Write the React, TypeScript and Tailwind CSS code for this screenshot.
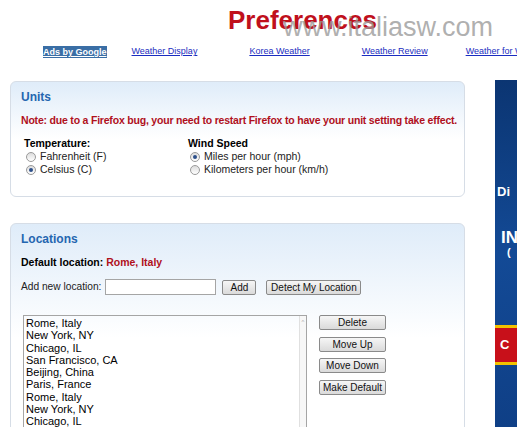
import React from 'react';

const Radio: React.FC<{ checked?: boolean }> = ({ checked }) => (
  <span className="inline-flex items-center justify-center w-[10px] h-[10px] rounded-full border border-[#9a9a9a] bg-gradient-to-b from-[#dcdcdc] to-white mr-[4px] shrink-0">
    {checked && <span className="w-[4px] h-[4px] rounded-full bg-[#2c4f8a]" />}
  </span>
);

const Btn: React.FC<{ label: string; className?: string }> = ({ label, className = '' }) => (
  <button
    className={`h-[15px] px-0 whitespace-nowrap border border-[#8a8a8a] rounded-[2px] bg-gradient-to-b from-[#f6f6f6] to-[#dadada] text-[10px] leading-[13px] text-[#111] ${className}`}
  >
    {label}
  </button>
);

const locations = [
  'Rome, Italy',
  'New York, NY',
  'Chicago, IL',
  'San Francisco, CA',
  'Beijing, China',
  'Paris, France',
  'Rome, Italy',
  'New York, NY',
  'Chicago, IL',
  'San Francisco, CA',
];

export default function App() {
  return (
    <div
      className="relative w-[517px] h-[427px] overflow-hidden bg-white"
      style={{ fontFamily: '"Liberation Sans", Arial, sans-serif' }}
    >
      {/* header */}
      <div className="pl-[228px] pt-[5px] h-[45px]">
        <h1 className="text-[26px] leading-[30px] font-bold text-[#c0101c]">Preferences</h1>
      </div>
      <div className="absolute left-[283px] top-[12px] text-[27px] leading-[30px] text-[#9a9a9a]/80 pointer-events-none whitespace-nowrap">
        www.italiasw.com
      </div>

      {/* link row */}
      <div className="flex items-center h-[14px] text-[9px] whitespace-nowrap">
        <span className="ml-[43px] w-[64px] h-[12px] bg-[#3a6ea5] text-white font-bold underline text-center leading-[12px]">
          Ads by Google
        </span>
        <a className="ml-[25px] text-[#1a2cc0] underline">Weather Display</a>
        <a className="ml-[52px] text-[#1a2cc0] underline">Korea Weather</a>
        <a className="ml-[52px] text-[#1a2cc0] underline">Weather Review</a>
        <a className="ml-[38px] text-[#1a2cc0] underline">Weather for Weather</a>
      </div>

      <div className="flex mt-[22px]">
        {/* main column */}
        <div className="ml-[10px] w-[455px] flex flex-col gap-[26px]">
          {/* Units */}
          <section className="h-[116px] rounded-[6px] border border-[#d6dde6] bg-gradient-to-b from-[#dfecf9] via-white to-white px-[10px] pt-[7px] text-[10.5px]">
            <h2 className="text-[#2466b0] font-bold text-[12px] leading-[16px]">Units</h2>
            <p className="mt-[8px] text-[#b0101c] font-bold text-[10.5px] leading-[14px] whitespace-nowrap tracking-[-0.2px]">
              Note: due to a Firefox bug, your need to restart Firefox to have your unit setting take effect.
            </p>
            <div className="flex mt-[9px] ml-[3px]">
              <div className="w-[164px]">
                <div className="font-bold leading-[14px]">Temperature:</div>
                <label className="flex items-center ml-[2px] leading-[13px] text-[#222]">
                  <Radio /> Fahrenheit (F)
                </label>
                <label className="flex items-center ml-[2px] leading-[13px] text-[#222]">
                  <Radio checked /> Celsius (C)
                </label>
              </div>
              <div>
                <div className="font-bold leading-[14px]">Wind Speed</div>
                <label className="flex items-center ml-[2px] leading-[13px] text-[#222]">
                  <Radio checked /> Miles per hour (mph)
                </label>
                <label className="flex items-center ml-[2px] leading-[13px] text-[#222]">
                  <Radio /> Kilometers per hour (km/h)
                </label>
              </div>
            </div>
          </section>

          {/* Locations */}
          <section className="h-[230px] rounded-[6px] border border-[#d6dde6] bg-gradient-to-b from-[#dfecf9] via-white to-white px-[10px] pt-[7px] text-[10.5px]">
            <h2 className="text-[#2466b0] font-bold text-[12px] leading-[16px]">Locations</h2>
            <p className="mt-[8px] font-bold leading-[14px]">
              Default location: <span className="text-[#b0101c]">Rome, Italy</span>
            </p>
            <div className="flex items-center mt-[10px]">
              <span className="text-[#222] text-[10.2px]">Add new location:</span>
              <input className="ml-[4px] w-[111px] h-[16px] border border-[#a5a5a5] bg-white" />
              <Btn label="Add" className="ml-[6px] w-[34px]" />
              <Btn label="Detect My Location" className="ml-[10px] w-[95px]" />
            </div>
            <div className="flex mt-[20px] ml-[2px]">
              <div className="w-[284px] h-[130px] border border-[#a5a5a5] flex overflow-hidden">
                <ul className="flex-1 pl-[2px] pt-[1px] text-[11px] leading-[12.3px] text-black">
                  {locations.map((l, i) => (
                    <li key={i}>{l}</li>
                  ))}
                </ul>
                <div className="w-[7px] border-l border-[#e0e0e0] bg-[#f7f7f7] flex justify-center pt-[3px]">
                  <span className="text-[6px] leading-[6px] text-[#aaa]">^</span>
                </div>
              </div>
              <div className="ml-[12px] flex flex-col gap-[6.5px]">
                <Btn label="Delete" className="w-[67px]" />
                <Btn label="Move Up" className="w-[67px]" />
                <Btn label="Move Down" className="w-[67px]" />
                <Btn label="Make Default" className="w-[67px]" />
              </div>
            </div>
          </section>
        </div>

        {/* side ad */}
        <div className="ml-[30px] w-[22px] h-[348px] -mt-[1px] bg-gradient-to-b from-[#0b3572] via-[#134a96] to-[#0f3f86] text-white font-bold overflow-hidden whitespace-nowrap flex flex-col">
          <div className="mt-[105px] pl-[2px] text-[13px] leading-[14px]">Di</div>
          <div className="mt-[30px] pl-[6px] text-[17px] leading-[18px]">IN</div>
          <div className="pl-[12px] text-[11px] leading-[10px]">(</div>
          <div className="mt-[68px] h-[40px] bg-[#c8101a] border-y-[3px] border-[#f2c200] flex items-center pl-[5px] text-[13px]">
            C
          </div>
        </div>
      </div>
    </div>
  );
}
